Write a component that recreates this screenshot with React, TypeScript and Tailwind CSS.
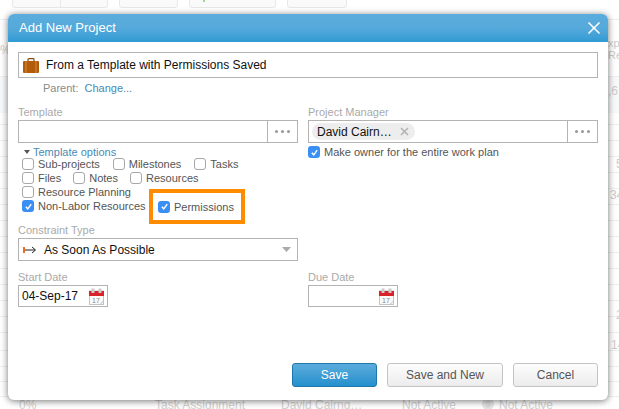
import React from 'react';
import { X } from 'lucide-react';

const rowLines = [19, 76, 92, 108, 124, 140, 156, 172, 188, 204, 220, 236, 252, 268, 284, 300, 316, 332, 350, 366, 381, 396];

const Check = ({ label, checked }: { label: string; checked?: boolean }) => (
  <label className="flex items-center gap-[4px] h-[14px] text-[11px] leading-[14px] text-[#555] whitespace-nowrap">
    {checked ? (
      <span className="w-[12px] h-[12px] rounded-[3px] bg-[#3b8ef3] flex items-center justify-center">
        <svg width="9" height="9" viewBox="0 0 10 10"><path d="M2 5.2 L4.2 7.6 L8 2.4" fill="none" stroke="#fff" strokeWidth="1.6" /></svg>
      </span>
    ) : (
      <span className="w-[12px] h-[12px] rounded-[3px] bg-white border border-[#a8a8a8]" />
    )}
    {label}
  </label>
);

const Dots = () => (
  <div className="w-[30px] h-full border-l border-[#b3b3b3] flex items-center justify-center gap-[3px] shrink-0">
    <span className="w-[3px] h-[3px] rounded-full bg-[#999]" />
    <span className="w-[3px] h-[3px] rounded-full bg-[#999]" />
    <span className="w-[3px] h-[3px] rounded-full bg-[#999]" />
  </div>
);

const Calendar = () => (
  <svg width="15" height="17" viewBox="0 0 15 17" className="shrink-0">
    <rect x="0.5" y="3" width="14" height="13.5" fill="#fafafa" stroke="#c4c4c4" />
    <rect x="0" y="3" width="15" height="5" fill="#d8232a" />
    <rect x="2.5" y="0.5" width="3" height="4.5" fill="#c9c9c9" />
    <rect x="9.5" y="0.5" width="3" height="4.5" fill="#c9c9c9" />
    <text x="7" y="14.5" textAnchor="middle" fontSize="7" fill="#888" fontFamily="Liberation Sans">17</text>
    <path d="M11.5 16 L14.5 13" stroke="#bbb" fill="none" />
  </svg>
);

const FieldLabel = ({ children }: { children: React.ReactNode }) => (
  <div className="text-[11px] leading-[14px] text-[#aaa]">{children}</div>
);

const Backdrop = () => (
  <div className="absolute inset-0 overflow-hidden text-[12px] text-[#d2d2d2] bg-white">
    {rowLines.map(y => (
      <div key={y} className="absolute left-0 right-0 h-px bg-[#efefef]" style={{ top: y }} />
    ))}
    <div className="absolute left-0 right-0 top-[77px] h-[36px] bg-[#f8f9fb]" />
    <div className="absolute left-[12px] top-[-2px] w-[96px] h-[10px] bg-[#fafafa] border border-[#e8e8e8] rounded-[3px] flex justify-center">
      <div className="w-px h-full bg-[#e8e8e8]" />
    </div>
    <div className="absolute left-[119px] top-[-2px] w-[59px] h-[10px] bg-[#fafafa] border border-[#e8e8e8] rounded-[3px]" />
    <div className="absolute left-[189px] top-[-2px] w-[87px] h-[10px] bg-[#fafafa] border border-[#e8e8e8] rounded-[3px]">
      <div className="absolute left-[13px] top-[1px] w-[2px] h-[2px] bg-[#a6d98c]" />
    </div>
    <div className="absolute left-[287px] top-[-2px] w-[60px] h-[10px] bg-[#fafafa] border border-[#e8e8e8] rounded-[3px]" />
    <div className="absolute left-[608px] top-[37px] text-[11px] leading-[12px] text-[#ccc]">xp<br />Rev</div>
    <div className="absolute left-[608px] top-[82px] text-[#ccc]">,61</div>
    <div className="absolute left-[616px] top-[155px] text-[#ccc]">5</div>
    <div className="absolute left-[610px] top-[186px] text-[#ccc]">340</div>
    <div className="absolute left-[616px] top-[306px] text-[#ccc]">2</div>
    <div className="absolute left-[611px] top-[336px] text-[#ccc]">14</div>
    <div className="absolute left-[0px] top-[41px] text-[#ccc]">%</div>
    <div className="absolute left-[19px] top-[396px]">0%</div>
    <div className="absolute left-[155px] top-[396px]">Task Assignment</div>
    <div className="absolute left-[281px] top-[396px]">David Cairng…</div>
    <div className="absolute left-[402px] top-[396px]">Not Active</div>
    <div className="absolute left-[482px] top-[398px] w-[12px] h-[12px] rounded-full bg-[#e4e4e4] text-[9px] leading-[12px] text-center">$</div>
    <div className="absolute left-[499px] top-[396px]">Not Active</div>
  </div>
);

export default function App() {
  return (
    <div className="relative w-[619px] h-[409px] overflow-hidden font-['Liberation_Sans',Arial,sans-serif]">
      <Backdrop />
      {/* Modal */}
      <div className="absolute left-[8px] top-[14px] w-[600px] h-[386px] bg-white rounded-[6px] shadow-[0_1px_7px_rgba(0,0,0,0.55)] flex flex-col overflow-hidden">
        <div className="h-[28px] shrink-0 bg-gradient-to-b from-[#5aacdc] via-[#55aadb] to-[#2f9bd4] flex items-center justify-between pl-[11px] pr-[4px]">
          <span className="text-[13px] text-white">Add New Project</span>
          <X size={20} strokeWidth={2} className="text-white" />
        </div>

        <div className="flex-1 flex flex-col px-[10px] pt-[10px] pb-[13px]">
          <div className="h-[26px] border border-[#b3b3b3] flex items-center pl-[4px] gap-[7px]">
            <svg width="16" height="15" viewBox="0 0 16 15" className="shrink-0">
              <path d="M5 3 V1.5 Q5 0.7 6 0.7 H10 Q11 0.7 11 1.5 V3" fill="none" stroke="#8a4a10" strokeWidth="1.2" />
              <rect x="0" y="3" width="16" height="12" rx="1" fill="#b35c08" />
              <path d="M3 3 V15 M13 3 V15" stroke="#d68a45" strokeWidth="1" />
            </svg>
            <span className="text-[12px] text-[#111]">From a Template with Permissions Saved</span>
          </div>
          <div className="flex gap-[6px] mt-[3px] pl-[25px] text-[11px] leading-[14px]">
            <span className="text-[#8a8a8a]">Parent:</span>
            <span className="text-[#4a8ab5]">Change...</span>
          </div>

          <div className="flex gap-[10px] mt-[10px]">
            <div className="w-[280px]">
              <FieldLabel>Template</FieldLabel>
              <div className="h-[23px] mt-[1px] border border-[#b3b3b3] flex justify-end"><Dots /></div>
              <div className="mt-[2px] ml-[6px] flex items-center gap-[3px] h-[14px] text-[11px] text-[#4a8ab5]">
                <svg width="6" height="4" viewBox="0 0 6 4"><path d="M0 0 H6 L3 4 Z" fill="#555" /></svg>
                Template options
              </div>
              <div className="ml-[4px] -mt-[2px] flex flex-col">
                <div className="flex gap-[13px]">
                  <Check label="Sub-projects" /><Check label="Milestones" /><Check label="Tasks" />
                </div>
                <div className="flex gap-[12px]">
                  <Check label="Files" /><Check label="Notes" /><Check label="Resources" />
                </div>
                <Check label="Resource Planning" />
                <div className="relative">
                  <Check label="Non-Labor Resources" checked />
                  <div className="absolute left-[127px] top-[-10px] w-[96px] h-[35px] border-[4px] border-[#ff8c00] flex items-center pl-[5px]">
                    <Check label="Permissions" checked />
                  </div>
                </div>
              </div>
            </div>
            <div className="flex-1">
              <FieldLabel>Project Manager</FieldLabel>
              <div className="h-[23px] mt-[1px] border border-[#b3b3b3] flex items-center justify-between">
                <div className="ml-[3px] h-[17px] w-[103px] rounded-full bg-[#ededed] flex items-center justify-between px-[5px] text-[12px] text-[#111]">
                  David Cairn…
                  <svg width="9" height="9" viewBox="0 0 9 9" className="mr-[1px]"><path d="M1 1 L8 8 M8 1 L1 8" stroke="#b4b4b4" strokeWidth="1.7" /></svg>
                </div>
                <Dots />
              </div>
              <div className="mt-[2px]">
                <Check label="Make owner for the entire work plan" checked />
              </div>
            </div>
          </div>

          <div className="mt-[10px] w-[280px]">
            <FieldLabel>Constraint Type</FieldLabel>
            <div className="h-[23px] mt-[1px] border border-[#b3b3b3] flex items-center pl-[4px] pr-[6px]">
              <svg width="14" height="8" viewBox="0 0 14 8" className="shrink-0">
                <rect x="0" y="1" width="2" height="6" fill="#f26a1b" />
                <path d="M2 4 H12 M9 1 L12.5 4 L9 7" fill="none" stroke="#222" strokeWidth="1" />
              </svg>
              <span className="ml-[7px] text-[12px] text-[#111]">As Soon As Possible</span>
              <svg width="9" height="5" viewBox="0 0 9 5" className="ml-auto"><path d="M0 0 H9 L4.5 5 Z" fill="#aaa" /></svg>
            </div>
          </div>

          <div className="flex gap-[10px] mt-[9px]">
            <div className="w-[280px]">
              <FieldLabel>Start Date</FieldLabel>
              <div className="w-[90px] h-[22px] mt-[1px] border border-[#b3b3b3] flex items-center justify-between pl-[3px] pr-[3px] text-[12px] text-[#111]">
                04-Sep-17
                <Calendar />
              </div>
            </div>
            <div>
              <FieldLabel>Due Date</FieldLabel>
              <div className="w-[90px] h-[22px] mt-[1px] border border-[#b3b3b3] flex items-center justify-end pr-[3px]">
                <Calendar />
              </div>
            </div>
          </div>

          <div className="mt-auto flex justify-end gap-[10px]">
            <button className="w-[85px] h-[24px] rounded-[3px] border border-[#1f76a8] bg-gradient-to-b from-[#5aacdc] to-[#2190cd] text-[12px] text-white">Save</button>
            <button className="w-[116px] h-[24px] rounded-[3px] border border-[#c4c4c4] bg-gradient-to-b from-[#fdfdfd] to-[#ececec] text-[12px] text-[#555]">Save and New</button>
            <button className="w-[85px] h-[24px] rounded-[3px] border border-[#c4c4c4] bg-gradient-to-b from-[#fdfdfd] to-[#ececec] text-[12px] text-[#555]">Cancel</button>
          </div>
        </div>
      </div>
    </div>
  );
}
